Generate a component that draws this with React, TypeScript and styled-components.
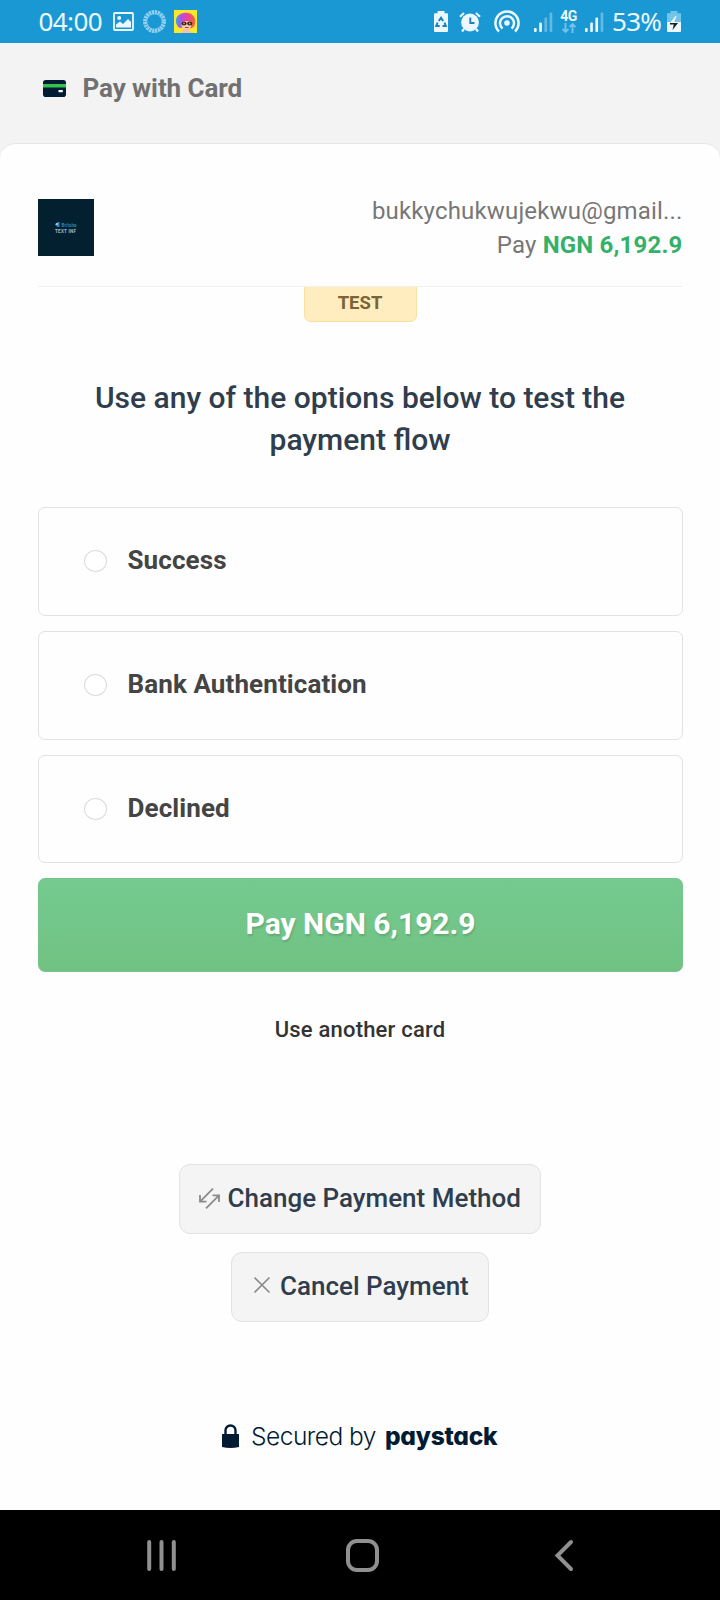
import React from "react";
import styled, { createGlobalStyle } from "styled-components";

const GlobalStyle = createGlobalStyle`
  * { box-sizing: border-box; }
  body { margin: 0; background: #fff; font-family: Roboto, "Liberation Sans", sans-serif; }
  button { font-family: inherit; padding: 0; cursor: pointer; }
`;

const Screen = styled.div`
  width: 720px;
  height: 1600px;
  display: flex;
  flex-direction: column;
  background: #fefefe;
  overflow: hidden;
`;

const StatusBar = styled.header`
  flex: none;
  height: 43px;
  display: flex;
  align-items: center;
  justify-content: space-between;
  padding: 0 39px 0 38.5px;
  background: #1a98d3;
  color: #ebf8ff;
  font-family: "Noto Sans", sans-serif;
`;

const StatusGroup = styled.div`
  display: flex;
  align-items: center;
  height: 43px;
`;

const StatusText = styled.span<{ $width: number; $spacing: number; $left?: number }>`
  width: ${(p) => p.$width}px;
  margin-left: ${(p) => p.$left ?? 0}px;
  font-size: 26px;
  line-height: 43px;
  letter-spacing: ${(p) => p.$spacing}px;
  white-space: nowrap;
`;

const Glyph = styled.svg<{ $left?: number; $top?: number }>`
  flex: none;
  display: block;
  margin-left: ${(p) => p.$left ?? 0}px;
  margin-top: ${(p) => p.$top ?? 0}px;
  overflow: visible;
`;

const Network = styled.div`
  display: flex;
  flex-direction: column;
  align-items: center;
  width: 16px;
  margin-left: 8px;
  font-family: Roboto, sans-serif;
  font-size: 14px;
  font-weight: 700;
  line-height: 12px;
  letter-spacing: -0.6px;
  gap: 1px;
`;

const MethodHeader = styled.div`
  flex: none;
  height: 118px;
  margin-bottom: -18px;
  display: flex;
  align-items: flex-start;
  gap: 16.5px;
  padding: 30px 0 0 43px;
  background: #f3f3f3;
`;

const MethodTitle = styled.h1`
  margin: 0;
  font-size: 26px;
  line-height: 30px;
  font-weight: 700;
  letter-spacing: -0.08px;
  color: #717171;
`;

const Sheet = styled.main`
  flex: 1;
  display: flex;
  flex-direction: column;
  align-items: center;
  padding: 0 37px 0 38px;
  border-top: 1px solid #e6e6e6;
  border-radius: 16px 16px 0 0;
  background: #fefefe;
`;

const Summary = styled.section`
  align-self: stretch;
  height: 143px;
  display: flex;
  justify-content: space-between;
  padding-top: 55px;
  border-bottom: 1px solid #f0f0f0;
`;

const Merchant = styled.div`
  width: 56px;
  height: 57px;
  display: flex;
  flex-direction: column;
  align-items: center;
  padding-top: 23px;
  background: #02202f;
`;

const Customer = styled.div`
  padding-right: 0.5px;
  margin-top: -5px;
  text-align: right;
  font-size: 24px;
  line-height: 34px;
  letter-spacing: 0.17px;
  color: #777;
`;

const Amount = styled.strong`
  font-weight: 700;
  color: #35b069;
`;

const TestBadge = styled.div`
  width: 113px;
  height: 35px;
  padding-right: 1px;
  border: 1px solid #f8e0a0;
  border-top: 0;
  border-radius: 0 0 7px 7px;
  background: #ffedc0;
  color: #7b6336;
  text-align: center;
  font-size: 18.5px;
  line-height: 33px;
  font-weight: 700;
`;

const Prompt = styled.h2`
  width: 580px;
  margin: 55px 1px 46px 0;
  text-align: center;
  font-size: 30px;
  line-height: 42px;
  font-weight: 500;
  color: #2f3d4d;
`;

const Options = styled.div`
  align-self: stretch;
  display: flex;
  flex-direction: column;
  gap: 15px;
`;

const Option = styled.label`
  height: 109px;
  display: flex;
  align-items: center;
  gap: 20.5px;
  padding: 0 0 4px 45px;
  border: 1px solid #e2e2e2;
  border-radius: 7px;
  font-size: 26px;
  font-weight: 700;
  line-height: 30px;
  letter-spacing: 0.1px;
  color: #444;

  &:last-child {
    height: 108px;
    padding-bottom: 3px;
  }
`;

const Radio = styled.input`
  appearance: none;
  width: 23px;
  height: 22px;
  margin: 3px 0 0;
  border: 1px solid #dcdcdc;
  border-radius: 50%;
  background: #fff;
`;

const PayButton = styled.button`
  align-self: stretch;
  height: 94px;
  margin-top: 15px;
  padding-bottom: 4px;
  border: 1px solid #74c48c;
  border-radius: 7px;
  background: linear-gradient(#74ca90, #71c282);
  color: #fff;
  font-size: 30px;
  font-weight: 700;
  text-shadow: 1px 2px 2px rgba(0, 0, 0, 0.14);
`;

const TextButton = styled.button`
  height: 30px;
  margin: 43px 1px 0 0;
  border: 0;
  background: none;
  color: #333;
  font-size: 22px;
  line-height: 30px;
  letter-spacing: 0.2px;
  font-weight: 500;
`;

const Actions = styled.div`
  display: flex;
  flex-direction: column;
  align-items: center;
  gap: 18px;
  margin: 119px 1px 0 0;
`;

const ActionButton = styled.button<{ $width: number; $inset: number; $gap: number }>`
  width: ${(p) => p.$width}px;
  height: 70px;
  display: flex;
  align-items: center;
  gap: ${(p) => p.$gap}px;
  padding: 0 0 3px ${(p) => p.$inset}px;
  border: 1px solid #e2e2e2;
  border-radius: 11px;
  background: #f4f4f4;
  color: #2f3d4d;
  font-size: 26px;
  line-height: 30px;
  font-weight: 500;
  white-space: nowrap;
`;

const Secured = styled.footer`
  display: flex;
  align-items: center;
  height: 30px;
  margin: 99px 1px 0 0;
  color: #011b33;
  font-family: Inter, sans-serif;
  font-size: 24.5px;
  line-height: 30px;
  font-weight: 350;
  white-space: nowrap;
`;

const SecuredText = styled.span`
  width: 134px;
  margin-left: 12px;
  letter-spacing: -0.5px;
`;

const Brand = styled.span`
  width: 113px;
  font-weight: 800;
  font-feature-settings: "cv11";
  letter-spacing: -0.25px;
`;

const NavBar = styled.nav`
  flex: none;
  height: 90px;
  display: flex;
  align-items: center;
  justify-content: space-between;
  padding: 0 147px;
  background: #000;
`;

const HomeGlyph = styled(Glyph)`
  margin-right: 6px;
`;

const Signal = ({ left, bars }: { left: number; bars: number }) => (
  <Glyph $left={left} width="19" height="20" viewBox="0 0 19 20" fill="currentColor">
    {[4, 9.5, 14.5, 19.5].map((h, i) => (
      <rect key={h} x={i * 5.2} y={20 - h} width="2.7" height={h} rx="1" opacity={i < bars ? 1 : 0.35} />
    ))}
  </Glyph>
);

const options = ["Success", "Bank Authentication", "Declined"];

export default function App() {
  return (
    <>
      <GlobalStyle />
      <Screen>
        <StatusBar>
          <StatusGroup>
            <StatusText $width={74.5} $spacing={-0.6}>04:00</StatusText>
            <Glyph width="21" height="19" viewBox="0 0 21 19">
              <rect x="1" y="1" width="19" height="17" rx="1" fill="none" stroke="currentColor" strokeWidth="1.8" />
              <circle cx="6.2" cy="6" r="2" fill="currentColor" />
              <path d="M3 15.5V12.5L7 9.5L10 12L15 7L18 10V15.5Z" fill="currentColor" />
            </Glyph>
            <Glyph $left={9} width="23" height="23" viewBox="0 0 23 23">
              <circle cx="11.5" cy="11.5" r="9.3" fill="none" stroke="#91cfee" strokeWidth="4.4" strokeDasharray="2.3 0.62" />
            </Glyph>
            <Glyph $left={8} width="23" height="23" viewBox="0 0 23 23">
              <defs>
                <linearGradient id="hair" x1="0" y1="0.5" x2="1" y2="0.5">
                  <stop offset="0" stopColor="#3ba4ec" />
                  <stop offset="0.3" stopColor="#b84be0" />
                  <stop offset="0.6" stopColor="#f0409d" />
                  <stop offset="1" stopColor="#ee6c2f" />
                </linearGradient>
              </defs>
              <rect width="23" height="23" fill="#fbe72c" />
              <path d="M3 15C0 10 3 3.5 10 3C17 2 23 7 21 14C20 18 17 19 15 18H7Q4 18 3 15Z" fill="url(#hair)" />
              <path d="M7.5 12Q12 10 17.5 12L17 17Q15 20 12 20Q8 19 7.5 16Z" fill="#f6c9a8" />
              <path d="M10 19H14.5L17.5 23H7Z" fill="#f0c0ac" />
              <ellipse cx="10" cy="13.5" rx="2.6" ry="1.9" fill="#332016" />
              <ellipse cx="15.7" cy="13.5" rx="2.6" ry="1.9" fill="#332016" />
              <circle cx="10" cy="13.5" r="0.9" fill="#d6a22c" />
              <circle cx="15.7" cy="13.5" r="0.9" fill="#d6a22c" />
              <path d="M11 17.5H14.5" stroke="#a83a35" />
            </Glyph>
          </StatusGroup>
          <StatusGroup>
            <Glyph width="14" height="21" viewBox="0 0 14 21">
              <path d="M3.5 0H10.5V2.3H13Q14 2.3 14 3.3V20Q14 21 13 21H1Q0 21 0 20V3.3Q0 2.3 1 2.3H3.5Z" fill="currentColor" />
              <path d="M4.8 10L7 6.8L9.2 10M10.5 11.5L11.8 15H8.5M5.7 15H2.3L3.5 11.5" fill="none" stroke="#1a82b8" strokeWidth="2" />
            </Glyph>
            <Glyph $left={11.5} width="22" height="20" viewBox="0 0 22 20">
              <circle cx="11" cy="10.5" r="8.9" fill="currentColor" />
              <path d="M1 4.8L5 1M21 4.8L17 1M5 17L3 19.5M17 17L19 19.5" stroke="currentColor" strokeWidth="2.2" />
              <path d="M11.3 5.5V11H15.5" fill="none" stroke="#1a82b8" strokeWidth="1.9" />
            </Glyph>
            <Glyph $left={13} $top={-1} width="26" height="22" viewBox="0 0 26 22" fill="none" stroke="currentColor" strokeWidth="2.5">
              <circle cx="13" cy="13" r="2.8" fill="currentColor" stroke="none" />
              <path d="M8.5 18.5A7 7 0 1 1 17.5 18.5" />
              <path d="M5 21.5A11.6 11.6 0 1 1 21 21.5" />
            </Glyph>
            <Signal left={13.5} bars={2} />
            <Network>
              <span>4G</span>
              <Glyph width="14" height="10" viewBox="0 0 14 10" fill="none" stroke="#74c3ea" strokeWidth="1.9">
                <path d="M3.5 0V9M0.5 6L3.5 9L6.5 6M10.5 10V1M7.5 4L10.5 1L13.5 4" />
              </Glyph>
            </Network>
            <Signal left={8.5} bars={3} />
            <StatusText $width={55} $spacing={-0.7} $left={8}>53%</StatusText>
            <Glyph width="14" height="21" viewBox="0 0 14 21">
              <path d="M3.5 0H10.5V2.3H14V11H0V2.3H3.5Z" fill="#74c3ea" />
              <path d="M0 11H14V20Q14 21 13 21H1Q0 21 0 20Z" fill="currentColor" />
              <path d="M8.5 5L3 12H7L9.5 5Z" fill="#ebf8ff" />
              <path d="M3 12H11L5.5 19L6.8 13.5H3Z" fill="#16222b" />
            </Glyph>
          </StatusGroup>
        </StatusBar>

        <MethodHeader>
          <Glyph $top={7} width="23" height="17" viewBox="0 0 23 17">
            <rect width="23" height="17" rx="2.8" fill="#011b33" />
            <rect y="4" width="23" height="3.5" fill="#35c24f" />
            <rect x="15.5" y="10" width="4.3" height="2.3" rx="0.5" fill="#fff" />
          </Glyph>
          <MethodTitle>Pay with Card</MethodTitle>
        </MethodHeader>

        <Sheet>
          <Summary>
            <Merchant>
              <Glyph width="22" height="12" viewBox="0 0 22 12">
                <path d="M0 2L3 0H4.5V5H2.5L0 3Z" fill="#2d86b5" />
                <path d="M1 1H3V3H1Z" fill="#7cc8ea" />
                <text x="6.5" y="5" fontSize="4.5" fontWeight="700" fill="#2d86b5" textLength="15">Briisha</text>
                <text x="0" y="11" fontSize="4.5" fontWeight="700" fill="#a9b8bf" textLength="21">TEXT INF</text>
              </Glyph>
            </Merchant>
            <Customer>
              <div>bukkychukwujekwu@gmail...</div>
              <div>Pay <Amount>NGN 6,192.9</Amount></div>
            </Customer>
          </Summary>
          <TestBadge>TEST</TestBadge>
          <Prompt>Use any of the options below to test the payment flow</Prompt>
          <Options>
            {options.map((name) => (
              <Option key={name}>
                <Radio type="radio" name="outcome" />
                {name}
              </Option>
            ))}
          </Options>
          <PayButton>Pay NGN 6,192.9</PayButton>
          <TextButton>Use another card</TextButton>
          <Actions>
            <ActionButton $width={362} $inset={18.5} $gap={8}>
              <Glyph $top={2} width="21" height="21" viewBox="0 0 21 21" fill="none" stroke="#8a8a8a" strokeWidth="1.8">
                <path d="M14 0.7L1 13.7M1 7V13.7H7.5M7 20.3L20 7.3M13.5 7.3H20V14" />
              </Glyph>
              Change Payment Method
            </ActionButton>
            <ActionButton $width={258} $inset={21.5} $gap={10.5}>
              <Glyph $top={-1} width="16" height="16" viewBox="0 0 16 16" fill="none" stroke="#8a8a8a" strokeWidth="1.6">
                <path d="M0.5 0.5L15.5 15.5M15.5 0.5L0.5 15.5" />
              </Glyph>
              Cancel Payment
            </ActionButton>
          </Actions>
          <Secured>
            <Glyph width="17" height="24" viewBox="0 0 17 24">
              <path d="M3.5 11V6.5A5 5 0 0 1 13.5 6.5V11" fill="none" stroke="#011b33" strokeWidth="2.4" />
              <path d="M0 10H17V23Q8.5 25 0 23Z" fill="#011b33" />
            </Glyph>
            <SecuredText>Secured by</SecuredText>
            <Brand>paystack</Brand>
          </Secured>
        </Sheet>

        <NavBar>
          <Glyph width="29" height="31" viewBox="0 0 29 31" stroke="#909090" strokeWidth="4" strokeLinecap="round">
            <path d="M2.2 2V29M14.5 2V29M26.8 2V29" />
          </Glyph>
          <HomeGlyph width="33" height="33" viewBox="0 0 33 33" fill="none" stroke="#909090" strokeWidth="4">
            <rect x="2" y="2" width="29" height="29" rx="9" />
          </HomeGlyph>
          <Glyph width="18" height="31" viewBox="0 0 18 31" fill="none" stroke="#909090" strokeWidth="4" strokeLinecap="round">
            <path d="M16 2L2.5 15.5L16 29" />
          </Glyph>
        </NavBar>
      </Screen>
    </>
  );
}
